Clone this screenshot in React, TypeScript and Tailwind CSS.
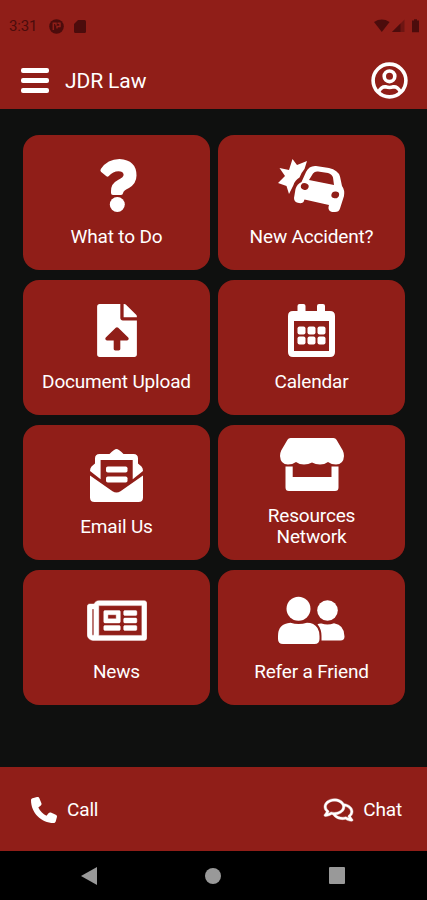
import { ReactNode } from "react";
import { FaFileUpload, FaRegComments, FaRegNewspaper } from "react-icons/fa";
import { FaPhone } from "react-icons/fa6";

const QuestionIcon = () => (
  <svg width={40} height={53} viewBox="-3 0 40 53" fill="currentColor">
    <path d="M0.800 10Q7.500 0 19.500 0Q36.500 1 36.500 16.500Q36.500 24.500 29 29Q23.500 31.500 23 34.200Q22.800 36 21 36H13Q11 36 11 34V32Q11 24.500 18 21Q24 18.200 23.600 15.500Q23 12.200 18.500 12.200Q13 12.200 8.800 17Q7.700 18.200 6.400 17.200L1.200 13Q-0.200 11.800 0.800 10Z" />
    <circle cx={17.300} cy={45.500} r={7.500} />
  </svg>
);

const CarCrashIcon = () => (
  <svg width={67} height={53} viewBox="0 0 67 53" fill="currentColor">
    <path d="M14.500 0L19 6L29 2L26.500 10Q23 14 21.500 18.500Q17 21 15.500 26L11 35L8.500 27L0 24L7 17L1.500 9L11 11Z" />
    <path
      fillRule="evenodd"
      d="M28 13Q31 6.500 38 7L51 9Q60 11 62 17.500L64 27Q67 31 66 37L62 49.500Q61 53 57 53H54Q50 52 50.500 48L51 46L26.500 40.500L25.500 43Q24.500 44.500 21 44Q16 43.500 16 39L17.500 30Q19 25 23.500 23ZM31 21L56 26L55 18.500Q54 15 50 14L40 12.500Q37 12 35 14.500ZM23 26.300A3.800 3.300 12 1 0 30.500 28.500A3.800 3.300 12 1 0 23 26.300ZM53.500 35.300A3.800 3.300 -12 1 0 61 36.500A3.800 3.300 -12 1 0 53.500 35.300Z"
    />
  </svg>
);

const CalendarIcon = () => (
  <svg width={47} height={53} viewBox="0 0 47 53" fill="currentColor">
    <rect x={9.5} y={0} width={8} height={12} rx={2} />
    <rect x={29} y={0} width={8} height={12} rx={2} />
    <path
      fillRule="evenodd"
      d="M5 7H42Q47 7 47 12V48Q47 53 42 53H5Q0 53 0 48V12Q0 7 5 7ZM6 17V47H41V17Z"
    />
    {[9.5, 19.5, 29.5].map((x) => (
      <g key={x}>
        <rect x={x} y={22.5} width={8} height={8} rx={2} />
        <rect x={x} y={32.5} width={8} height={8} rx={2} />
      </g>
    ))}
  </svg>
);

const EmailIcon = () => (
  <svg width={53} height={53} viewBox="0 0 53 53" fill="currentColor">
    <path d="M19.500 5Q24.500 0 26.500 0Q28.500 0 33.500 5H43.500Q48 5 48 9.500V14.500L51.500 17.500Q53 19 53 22L42.700 30.200V11H10.600V30.200L0 22Q0 19 1.500 17.500L5 14.500V9.500Q5 5 9.500 5Z" />
    <path d="M0 26.500L22.500 42.300Q26.500 44.800 30.500 42.300L53 26.500V48.500Q53 53 48.500 53H4.500Q0 53 0 48.500Z" />
    <rect x={16} y={17.500} width={21.500} height={6} rx={1.800} />
    <rect x={16} y={27.500} width={21.500} height={6} rx={1.800} />
  </svg>
);

const StoreIcon = () => (
  <svg width={64} height={53} viewBox="0 0 64 53" fill="currentColor">
    <path d="M10.500 0H53.500Q55.500 0 56.500 1.700L62.800 12.500Q64 15 64 18Q63.500 26.500 56 26.500Q51.500 26.500 48 24Q44.500 26.500 40 26.500Q35.500 26.500 32 24.500Q28.500 26.500 24 26.500Q19.500 26.500 16 24Q12.500 26.500 8 26.500Q0.500 26.500 0 18Q0 15 1.200 12.500L7.500 1.700Q8.500 0 10.500 0Z" />
    <path d="M5.500 28.500H12.700V39H51.500V28.500H58.500V49.500Q58.500 53 55 53H9Q5.500 53 5.500 49.500Z" />
  </svg>
);

const FriendsIcon = () => (
  <svg width={67} height={53} viewBox="0 0 67 53" fill="currentColor">
    <circle cx={20.500} cy={14.800} r={12} />
    <circle cx={49.500} cy={16.500} r={10.300} />
    <path d="M12.500 28.700Q20.500 31.500 29 28.700Q36 28.700 39.500 34Q41.500 37.500 41.500 42V45Q41.500 50 36.500 50H5Q0 50 0 45V42Q0 29.500 12.500 28.700Z" />
    <path d="M39.500 30.200Q41 29.300 43.500 29.500Q49.500 31.700 56 29.300Q66.500 31 66.500 42.500Q66.500 46.500 62.500 46.500H43.500V42Q43.500 35 39.500 30.200Z" />
  </svg>
);

const ProfileIcon = () => (
  <svg width={37} height={37} viewBox="0 0 37 37" fill="none" stroke="currentColor" strokeWidth={3.6}>
    <circle cx={18.500} cy={18.500} r={16.400} />
    <circle cx={18.500} cy={14.300} r={5.300} />
    <path d="M7.800 29.500Q10.500 24.500 14.500 24.800Q18.500 26.200 22.500 24.800Q26.500 24.500 29.200 29.500" />
  </svg>
);

const tiles: { label: string; icon: ReactNode }[] = [
  { label: "What to Do", icon: <QuestionIcon /> },
  { label: "New Accident?", icon: <CarCrashIcon /> },
  { label: "Document Upload", icon: <FaFileUpload className="h-[53px] w-10" /> },
  { label: "Calendar", icon: <CalendarIcon /> },
  { label: "Email Us", icon: <EmailIcon /> },
  { label: "Resources Network", icon: <StoreIcon /> },
  { label: "News", icon: <FaRegNewspaper className="h-[53px] w-[60px]" stroke="currentColor" strokeWidth={4} /> },
  { label: "Refer a Friend", icon: <FriendsIcon /> },
];

const StatusBar = () => (
  <div className="flex h-[52px] items-center pl-[9px] pr-[7px] text-[#4c0c0c]">
    <span className="text-[15px] leading-5 tracking-[-0.2px]">3:31</span>
    <svg className="ml-3" width={15} height={15} viewBox="0 0 15 15">
      <circle cx={7.500} cy={7.500} r={7.300} fill="currentColor" />
      <path d="M4.300 11V4.200H7V6.500M8.500 4.200H11V7.500H8V9.500" fill="none" stroke="#901e18" strokeWidth={1.500} />
    </svg>
    <svg className="ml-[10px]" width={12} height={13} viewBox="0 0 12 13" fill="currentColor">
      <path d="M4 0H10.500Q12 0 12 1.500V11.500Q12 13 10.500 13H1.500Q0 13 0 11.500V4Z" />
    </svg>
    <svg className="ml-auto" width={46} height={14} viewBox="0 0 46 14" fill="currentColor">
      <path d="M0 3Q7.800-1.800 15.600 3L7.800 13Z" />
      <path d="M30.500 0.500V13H18Z" opacity={0.500} />
      <path d="M26.500 4.500V13H18Z" />
      <path d="M38 1.500H40V0.300H43V1.500H45V13.300H38Z" />
    </svg>
  </div>
);

const App = () => {
  return (
    <main className="flex h-[900px] w-[427px] flex-col overflow-hidden bg-[#0f100f] font-['Roboto',sans-serif] text-white">
      <header className="h-[109px] bg-[#901e18]">
        <StatusBar />
        <div className="flex h-[57px] items-center pl-[21px] pr-[19px]">
          <div className="flex w-[28px] flex-col gap-[4.500px]">
            <span className="h-[5.500px] rounded-[2px] bg-white" />
            <span className="h-[5.500px] rounded-[2px] bg-white" />
            <span className="h-[5.500px] rounded-[2px] bg-white" />
          </div>
          <h1 className="ml-4 text-[21px] leading-6 tracking-[-0.1px]">JDR Law</h1>
          <span className="ml-auto">
            <ProfileIcon />
          </span>
        </div>
      </header>

      <section className="grid grid-cols-[187px_187px] auto-rows-[135px] gap-x-2 gap-y-[10px] pl-[23px] pt-[26px]">
        {tiles.map((tile) => (
          <button
            key={tile.label}
            className="flex flex-col items-center justify-center gap-[14px] rounded-[16px] bg-[#901e18]"
          >
            {tile.icon}
            <span
              className={`text-[19px] leading-[21px] tracking-[-0.17px] ${tile.label === "Resources Network" ? "w-[110px]" : ""}`}
            >
              {tile.label}
            </span>
          </button>
        ))}
      </section>

      <footer className="mt-auto">
        <div className="flex h-[84px] items-center justify-between bg-[#901e18] pl-[31px] pr-[25px] pt-[2px] text-[19px] tracking-[-0.15px]">
          <button className="flex items-center gap-[10px]">
            <FaPhone className="size-[26px]" />
            <span>Call</span>
          </button>
          <button className="flex items-center gap-[10px]">
            <FaRegComments className="h-[26px] w-[29px] overflow-visible" stroke="currentColor" strokeWidth={8} />
            <span>Chat</span>
          </button>
        </div>
        <nav className="flex h-[49px] items-center justify-between bg-black pl-[81px] pr-[82px] text-[#999999]">
          <svg width={16} height={18} viewBox="0 0 16 18" fill="currentColor">
            <path d="M0 9L16 0V18Z" />
          </svg>
          <span className="size-4 rounded-full bg-[#999999]" />
          <span className="h-[17px] w-4 rounded-[1px] bg-[#999999]" />
        </nav>
      </footer>
    </main>
  );
};

export default App;
